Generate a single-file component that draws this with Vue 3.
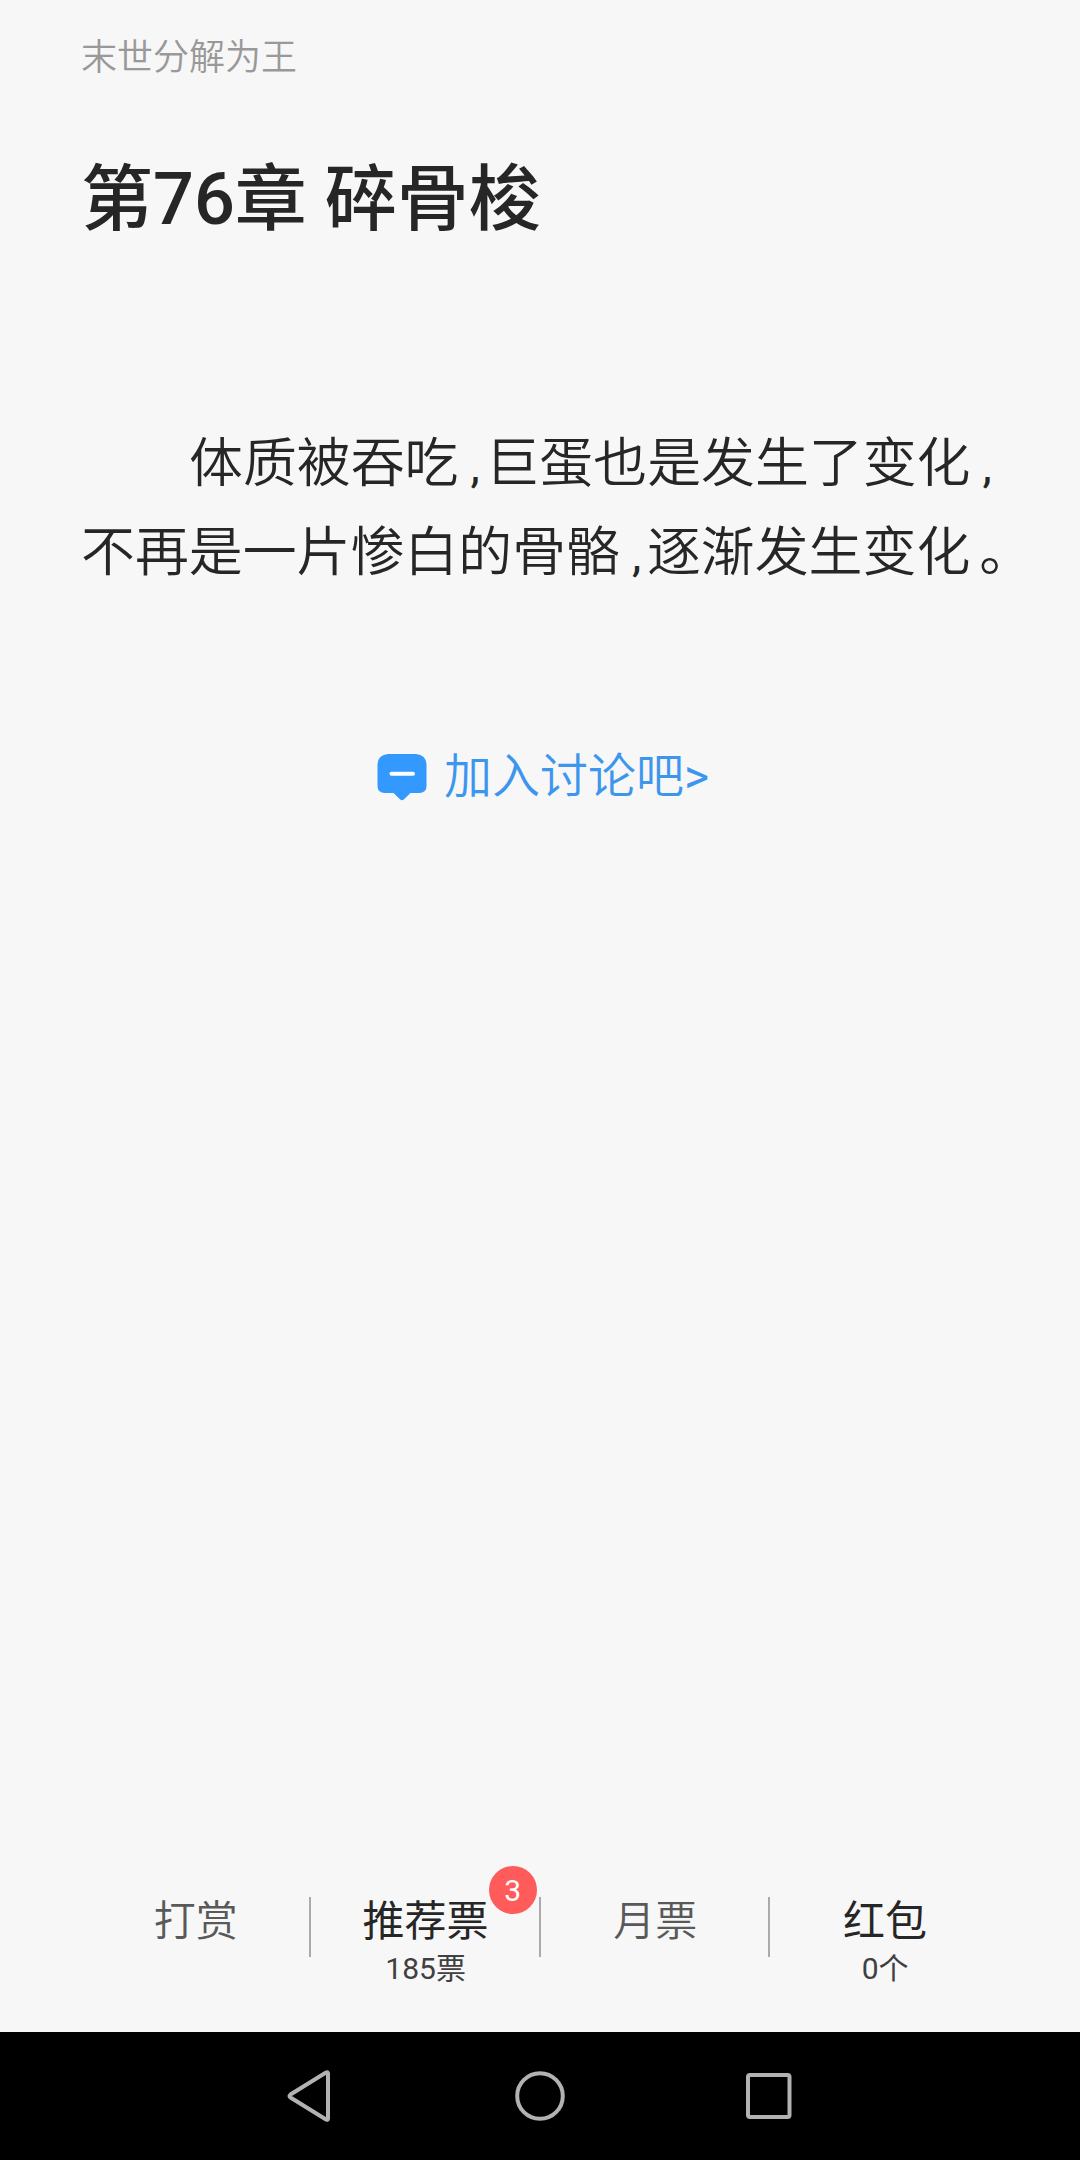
<script setup>
const lines = [
  { indent: true, parts: [['体质被吞吃', ','], ['巨蛋也是发生了变化', ',']] },
  { indent: false, parts: [['不再是一片惨白的骨骼', ','], ['逐渐发生变化', '。']] }
]
const actions = [
  { label: '打赏' },
  { label: '推荐票', sub: '185票', badge: 3, active: true },
  { label: '月票' },
  { label: '红包', sub: '0个', active: true }
]
</script>

<template>
  <div class="screen">
    <main class="reader">
      <header class="book">末世分解为王</header>
      <h1 class="title">第76章 碎骨梭</h1>
      <div class="body">
        <p v-for="(line, i) in lines" :key="i" class="line" :class="{ indent: line.indent }">
          <template v-for="(part, j) in line.parts" :key="j">{{ part[0] }}<span :class="part[1] === ',' ? 'comma' : 'stop'">{{ part[1] }}</span></template>
        </p>
      </div>
      <a class="discuss">
        <svg class="bubble" width="50" height="48" viewBox="0 0 50 48">
          <path d="M11 1H39Q49.500 2 49.500 12V33Q49.500 40 42 40H33.500L27 46.300Q25 48 23 46.300L16.500 40H8Q.5 40 .5 33V12Q.5 2 11 1Z" fill="#3399ff" />
          <path d="M14.500 20.800H36" stroke="#fff" stroke-width="4" stroke-linecap="round" />
        </svg>
        <span>加入讨论吧<span class="arrow">&gt;</span></span>
      </a>
      <div class="actions">
        <div v-for="a in actions" :key="a.label" class="action" :class="{ active: a.active }">
          <span class="label">{{ a.label }}</span>
          <span v-if="a.sub" class="sub">{{ a.sub }}</span>
          <span v-if="a.badge" class="badge">{{ a.badge }}</span>
        </div>
      </div>
    </main>
    <nav class="nav">
      <svg width="50" height="54" viewBox="0 0 50 54"><path d="M43 4.500V49.500Q43 51.500 41 50.500L5.500 28.500Q3.500 27 5.500 25.500L41 3.500Q43 2.500 43 4.500Z" /></svg>
      <svg width="54" height="54" viewBox="0 0 54 54"><circle cx="27" cy="27" r="22.800" /></svg>
      <svg width="50" height="54" viewBox="0 0 50 54"><rect x="4" y="6" width="41.500" height="42" rx="2" /></svg>
    </nav>
  </div>
</template>

<style>
body { margin: 0; background: #f7f7f7; }
</style>
<style scoped>
.screen {
  width: 1080px;
  height: 2160px;
  display: flex;
  flex-direction: column;
  overflow: hidden;
  background: #f7f7f7;
  color: #262626;
  font-family: Roboto, "Noto Sans CJK SC", sans-serif;
}
.reader {
  height: 2032px;
  box-sizing: border-box;
  padding: 34px 0 0 81px;
  display: flex;
  flex-direction: column;
}
.book { font-size: 36px; line-height: 48px; font-weight: 350; color: #999; }
.title { margin: 68px 0 0; font-size: 72px; line-height: 100px; font-weight: 500; white-space: pre; }
.body { margin-top: 169px; }
.line {
  margin: 0;
  height: 89px;
  font-size: 53.900px;
  line-height: 89px;
  font-weight: 350;
  white-space: nowrap;
}
.indent { padding-left: 108px; }
.comma { display: inline-block; width: 15px; padding-left: 12px; font-size: 47px; line-height: 1; font-weight: 450; }
.stop { margin-left: 9px; }
.discuss {
  margin: 147px 0 0 296px;
  height: 66px;
  display: flex;
  align-items: center;
  gap: 17px;
  color: #3d96ee;
  font-size: 48px;
  line-height: 66px;
  font-weight: 350;
  white-space: nowrap;
}
.bubble { flex: none; }
.arrow { font-weight: 400; }
.actions { margin-top: 1087px; width: 919px; display: flex; }
.action {
  position: relative;
  flex: 1;
  height: 100px;
  display: flex;
  flex-direction: column;
  align-items: center;
  color: #595959;
}
.action + .action::before {
  content: "";
  position: absolute;
  left: -2px;
  top: 0;
  width: 2px;
  height: 60px;
  background: #aaa;
}
.label { font-size: 42px; line-height: 50px; font-weight: 350; }
.active .label { color: #262626; font-weight: 400; }
.sub { margin-top: 2px; font-size: 30px; line-height: 40px; font-weight: 400; color: #404040; }
.badge {
  position: absolute;
  left: 178px;
  top: -31px;
  width: 48px;
  height: 48px;
  border-radius: 50%;
  background: #ff5b5b;
  color: #fff;
  font-size: 30px;
  line-height: 49px;
  text-align: center;
}
.nav {
  height: 128px;
  box-sizing: border-box;
  padding: 0 286px 0 285px;
  display: flex;
  align-items: center;
  justify-content: space-between;
  background: #000;
}
.nav svg { fill: none; stroke: #b2b2b2; stroke-width: 4; }
</style>
